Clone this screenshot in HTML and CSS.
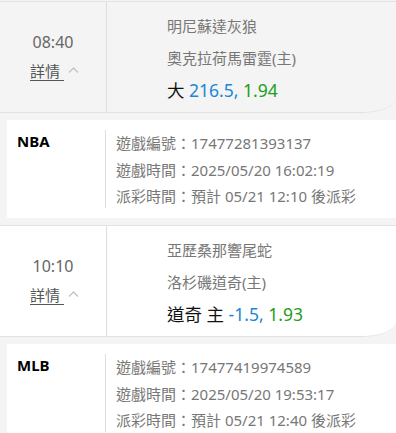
FILE: index.html
```html
<!DOCTYPE html>
<html lang="zh-Hant">
<head>
    <meta charset="UTF-8">
    <meta name="viewport" content="width=device-width, initial-scale=1.0">
    <title>注單紀錄</title>
    <link rel="stylesheet" href="styles.css">
</head>
<body>

    <div class="list">
        <div class="match active">
            <div class="match-time">
                <div class="time">08:40</div>
                <div class="toggle-row">
                    <a class="toggle" href="#">詳情 </a>
                    <svg class="chev" width="11" height="6" viewBox="0 0 11 6"><path d="M1 5.5 L5.5 1 L10 5.5" fill="none" stroke="#c4c4c4" stroke-width="1.4"/></svg>
                </div>
            </div>
            <div class="match-info">
                <p class="team">明尼蘇達灰狼</p>
                <p class="team">奧克拉荷馬雷霆(主)</p>
                <p class="bet">大 <span class="line">216.5,</span> <span class="odds">1.94</span></p>
            </div>
        </div>
        <div class="detail">
            <div class="detail-card">
                <div class="league">NBA</div>
                <div class="detail-info">
                    <p>遊戲編號：17477281393137</p>
                    <p>遊戲時間：2025/05/20 16:02:19</p>
                    <p>派彩時間：預計 05/21 12:10 後派彩</p>
                </div>
            </div>
        </div>

        <div class="match">
            <div class="match-time">
                <div class="time">10:10</div>
                <div class="toggle-row">
                    <a class="toggle" href="#">詳情 </a>
                    <svg class="chev" width="11" height="6" viewBox="0 0 11 6"><path d="M1 5.5 L5.5 1 L10 5.5" fill="none" stroke="#c4c4c4" stroke-width="1.4"/></svg>
                </div>
            </div>
            <div class="match-info">
                <p class="team">亞歷桑那響尾蛇</p>
                <p class="team">洛杉磯道奇(主)</p>
                <p class="bet">道奇 主 <span class="line">-1.5,</span> <span class="odds">1.93</span></p>
            </div>
        </div>
        <div class="detail">
            <div class="detail-card">
                <div class="league">MLB</div>
                <div class="detail-info">
                    <p>遊戲編號：17477419974589</p>
                    <p>遊戲時間：2025/05/20 19:53:17</p>
                    <p>派彩時間：預計 05/21 12:40 後派彩</p>
                </div>
            </div>
        </div>
    </div>

</body>
</html>
```

FILE: styles.css
```css
body {
    margin: 0;
    padding: 0;
    background-color: #f4f4f4;
    font-family: "Noto Sans", "Noto Sans CJK TC", sans-serif;
    overflow: hidden;
}

p {
    margin: 0;
}

.list {
    padding-top: 1px;
}

.match {
    display: flex;
    height: 110px;
    background-color: #fff;
    border-top: 1px solid #e2e2e2;
    border-bottom: 1px solid #e2e2e2;
    border-bottom-right-radius: 34px 15px;
}

.match.active {
    background-color: #f4f4f4;
}

.match-time {
    width: 106px;
    border-right: 1px solid #dedede;
    display: flex;
    flex-direction: column;
    align-items: center;
    justify-content: center;
}

.time {
    font-size: 16px;
    line-height: 28px;
    color: #666;
    margin-top: 0;
}

.toggle-row {
    display: flex;
    align-items: center;
    gap: 4px;
    margin-left: 3px;
}

.toggle {
    font-size: 15px;
    line-height: 30px;
    color: #555;
    text-decoration: underline;
    text-underline-offset: 3px;
    white-space: pre;
}

.chev {
    display: block;
    margin-top: -2px;
}

.match-info {
    padding: 8px 0 0 60px;
}

.team {
    font-size: 15px;
    line-height: 32px;
    color: #777;
}

.bet {
    font-size: 17.5px;
    line-height: 32px;
    color: #111;
}

.line {
    color: #1a86d4;
}

.odds {
    color: #1c9e1c;
}

.detail {
    padding: 7px 0 7px 7px;
}

.detail-card {
    display: flex;
    height: 98px;
    background-color: #fff;
    box-sizing: border-box;
    padding-top: 10px;
}

.league {
    width: 88px;
    padding-left: 10px;
    font-size: 15px;
    font-weight: bold;
    line-height: 22px;
    color: #000;
}

.detail-info {
    height: 78px;
    border-left: 1px solid #dedede;
    padding-left: 10px;
}

.detail-info p {
    font-size: 15px;
    line-height: 26.5px;
    color: #777;
    white-space: nowrap;
}
```
